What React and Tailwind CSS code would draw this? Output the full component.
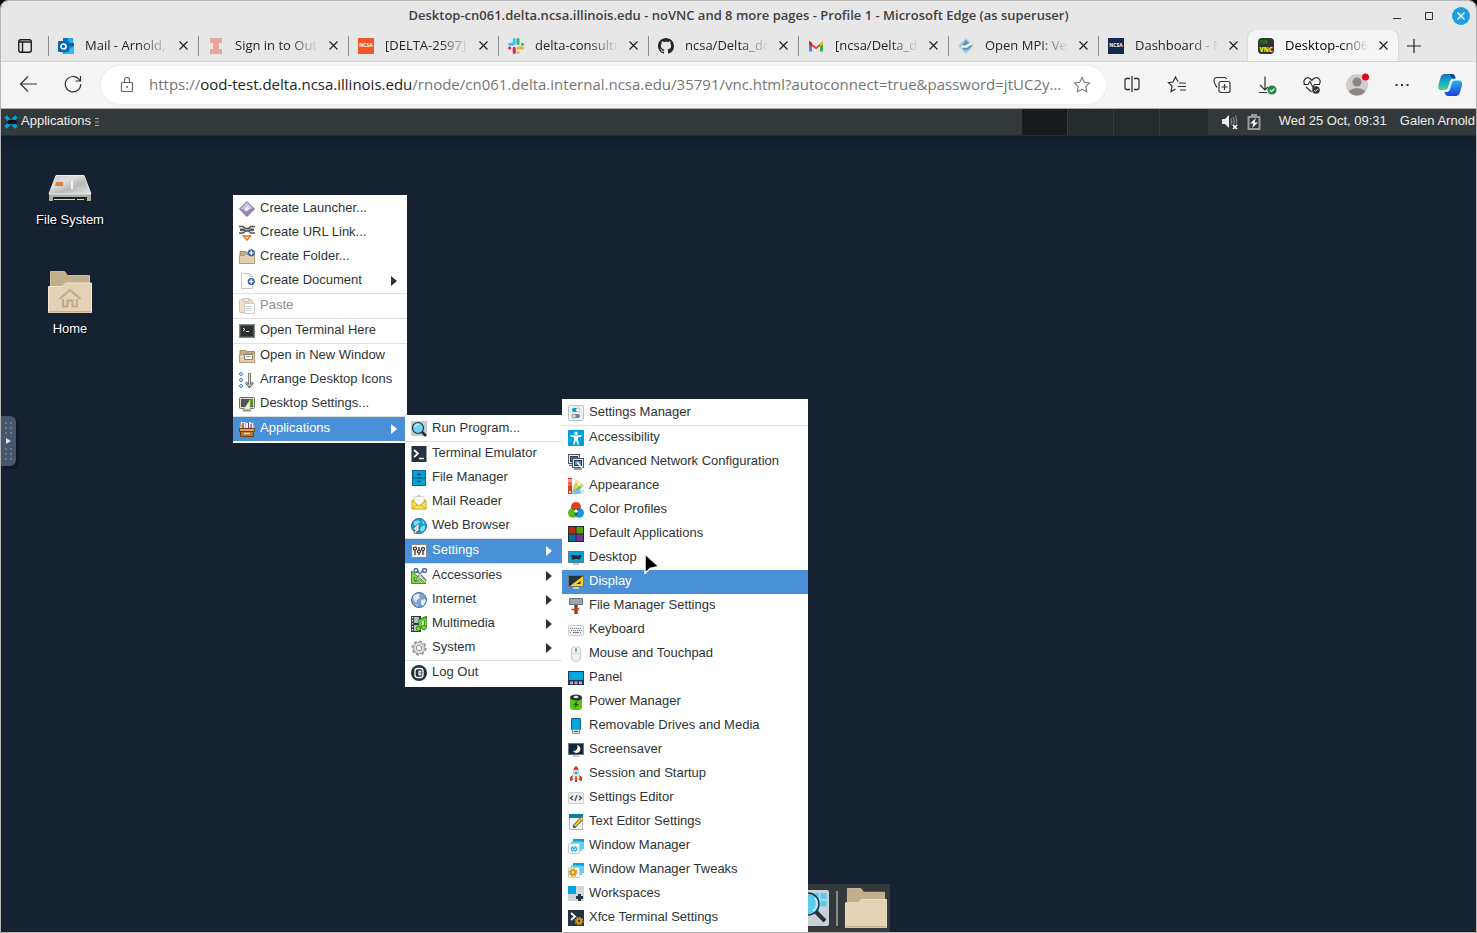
import React from "react";

const UI = "font-['Open_Sans','Noto_Sans',sans-serif]";
const GTK = "font-['Liberation_Sans',Arial,sans-serif]";

function Svg({ children, size = 16, className = "", box = 16 }) {
  return (
    <svg
      aria-hidden="true"
      width={size}
      height={size}
      viewBox={`0 0 ${box} ${box}`}
      fill="none"
      className={`shrink-0 ${className}`}
    >
      {children}
    </svg>
  );
}

/* ---------- menu icons, all on a 16 x 16 grid ---------- */

const monitor = (fill) => (
  <>
    <rect y="1" width="16" height="12" fill="#6b7680" />
    <rect x="1" y="2" width="14" height="10" fill={fill} />
    <path d="M5 13h6v2H5z" fill="#c3c8cc" />
  </>
);

const folder = (
  <>
    <path d="M1 2.5h6l1 1h7.5V14H1z" fill="#c1ab88" stroke="#a58f6a" />
    <path d="M.5 6.5h5l1-1h9v9H.5z" fill="#e2ceb1" stroke="#b59b74" />
  </>
);

const plusBadge = (x, y) => (
  <g transform={`translate(${x} ${y})`}>
    <circle r="3.6" fill="#3465a4" />
    <path d="M-2.2 0h4.4M0-2.2v4.400" stroke="#fff" strokeWidth="1.3" />
  </g>
);

const stackedWindows = (
  <>
    <path d="M5 1h11v10H5z" fill="#00a6dd" />
    <path d="M13 4h3v7h-3z" fill="#5fd0f4" />
    <path d="M3 3.5h11V13H3z" fill="#5fd0f4" />
    <rect x=".5" y="5.5" width="11" height="10" rx="1" fill="#f2f4f5" stroke="#c5cace" />
  </>
);

const gear = (color, cx, cy, r) => (
  <g transform={`translate(${cx} ${cy})`} stroke={color}>
    <circle r={r} strokeWidth="2" />
    <circle r={r + 1.4} strokeWidth="1.6" strokeDasharray={`${(r + 1.4) * 0.393} ${(r + 1.4) * 0.393}`} />
  </g>
);

const icons = {
  launcher: (
    <>
      <path d="M8 .5 15.5 8 8 15.5.5 8z" fill="#9a8bba" stroke="#81759c" />
      <path d="M8 1.2 14.200 7.500 8 10 1.800 7.500z" fill="#cbc2de" />
      <path d="M8 10v5M8 10l6-2.500" stroke="#7d6ea0" strokeWidth=".8" />
      <path d="M5.500 8.500 9 4l-.4 3L11 6.500 7.500 11z" fill="#fff" fillOpacity=".75" />
    </>
  ),
  link: (
    <>
      <path d="M0 1.500h4l2.500 2h3l2.500-2h4M0 8h4l2.500-2h3L12 8h4" stroke="#50524f" strokeWidth="1.600" />
      <path d="M1 4.700h14" stroke="#50524f" strokeWidth="2.600" />
      <path d="M0 3h4M12 3h4M2 6.300h3M11 6.300h3M5.500 4.700h5" stroke="#c8cac5" strokeWidth="1.100" />
      <path d="M4.500 11h7L8 15z" fill="#fff" stroke="#e8791a" strokeWidth="1.500" />
    </>
  ),
  newFolder: <>{folder}{plusBadge(12.3, 3.800)}</>,
  newDoc: (
    <>
      <path d="M2.500.5h8l3 3v12h-11z" fill="#fbfbfb" stroke="#c6c8c4" />
      <path d="M10.500.5v3h3" stroke="#c6c8c4" />
      {plusBadge(12.300, 8.500)}
    </>
  ),
  paste: (
    <g opacity=".6">
      <rect x=".5" y="1.500" width="13" height="13" rx="1" fill="#e5cda2" stroke="#b79a68" />
      <path d="M4 .5h6v3H4z" fill="#ddd" stroke="#999" />
      <path d="M5.500 5.500h10v10h-10z" fill="#fff" stroke="#aaa" />
      <path d="M7 8.500h6M7 10.500h7M7 12.500h5" stroke="#b5b5b5" />
    </g>
  ),
  terminal: (
    <>
      <rect x=".5" y="1.500" width="15" height="13" fill="#2b302d" stroke="#888a85" />
      <rect x="1.500" y="2.500" width="13" height="11" stroke="#4c504d" />
      <path d="m4 5 2 1.500L4 8M7 8.500h3" stroke="#e7ebe4" />
    </>
  ),
  newWindow: (
    <>
      {folder}
      <path d="M5.500 6.500h8v5h-8z" fill="#fff" stroke="#84827b" />
      <path d="M7 8.500h5" stroke="#a7a59d" />
    </>
  ),
  arrange: (
    <>
      <g stroke="#4b7bb8" fill="#e8f0fa">
        <circle cx="2" cy="2" r="1.500" />
        <circle cx="2" cy="8" r="1.500" />
        <circle cx="2" cy="14" r="1.500" />
      </g>
      <path d="M10.500 1v13M7 10.500l3.500 4 3.500-4" stroke="#5c5f5b" strokeWidth="2.600" />
      <path d="M10.500 1.500v12M7.500 11l3 3.300 3-3.300" stroke="#dfe0de" />
    </>
  ),
  desktopSettings: (
    <>
      <rect x=".5" y="1.500" width="15" height="11" rx="1" fill="#d9dbd7" stroke="#6b6e69" />
      <rect x="2" y="3" width="12" height="8" fill="#4d584c" />
      <path d="M10 3h4v7h-4z" fill="#4e9a06" />
      <path d="M4 14.500 11 4v9z" fill="#f6efd9" stroke="#c9bd96" strokeWidth=".6" />
      <path d="M4 14.500h8" stroke="#8d908b" strokeWidth="2" />
    </>
  ),
  applications: (
    <>
      <path d="M2 8 3 1M5.500 8V1M8 8V2M11 8V1M14 8l-1-6" stroke="#f2f0f3" strokeWidth="2" />
      <path d="M4 2v6M9.500 2v6M12 3v5" stroke="#8b3150" />
      <path d="M1 3.500 3 6" stroke="#d9a521" strokeWidth="2" />
      <path d="M.5 7.500h15v3H.5z" fill="#d5a663" stroke="#6b3f10" />
      <path d="M1.500 10.500h13v5h-13z" fill="#b5762f" stroke="#6b3f10" />
      <path d="M5 12.500h6" stroke="#f4dcb0" strokeWidth="1.500" />
    </>
  ),
  run: (
    <>
      <rect x="0" y="0" width="16" height="15" rx="1" fill="#c4c9cc" />
      <path d="m10.500 10.500 4.500 4.500" stroke="#25323c" strokeWidth="2.600" />
      <circle cx="7" cy="7" r="5.500" fill="#6ed3f4" stroke="#25323c" strokeWidth="1.200" />
      <path d="M4 6a3.500 3.500 0 0 1 4-2.500" stroke="#c6f0fc" strokeWidth="1.300" />
    </>
  ),
  xterm: (
    <>
      <rect x=".5" width="15" height="16" fill="#263442" />
      <path d="m3 4 4 3.500L3 11" stroke="#fff" strokeWidth="1.700" />
      <path d="M8 12.500h5" stroke="#fff" strokeWidth="1.500" />
    </>
  ),
  fileManager: (
    <>
      <rect x="1.500" y=".5" width="13" height="15" fill="#00a4db" stroke="#14668a" />
      <path d="M2 8h12" stroke="#14506e" strokeWidth="1.200" />
      <path d="M6 4.500h4M6 11.500h4" stroke="#0d3c54" strokeWidth="1.300" />
    </>
  ),
  mail: (
    <>
      <path d="M1 6 8 .8 15 6v9H1z" fill="#e5bd1b" />
      <path d="M3 2.500h10v9H3z" fill="#f7f8f8" stroke="#c8ccce" strokeWidth=".7" />
      <path d="M1 6.500 8 12l7-5.500V15H1z" fill="#fbe26b" stroke="#d4a500" />
      <path d="m1.500 14.500 5-4M14.500 14.500l-5-4" stroke="#d4a500" />
    </>
  ),
  web: (
    <>
      <circle cx="8" cy="8" r="7.500" fill="#15a2d6" stroke="#0f7096" />
      <path d="M3 4c2-2 5-2 6 0l-1 3-2 1-3-1zM10 9l4-2v4l-3 3-2-2zM11 2l3 3-2 1z" fill="#84dcf7" />
      <path d="m8 5-6.500 6L4 12l-1 3 2 .8L6.300 13 8 14z" fill="#dfe5e8" stroke="#36566a" strokeWidth=".7" />
    </>
  ),
  settings: (
    <>
      <rect x=".5" y="1.500" width="15" height="13" rx="1" fill="#f3f3f1" stroke="#898b87" />
      <path d="M4 4v8M8 4v8M12 4v8" stroke="#2c2f2e" strokeWidth="1.200" />
      <g fill="#f3f3f1" stroke="#2c2f2e" strokeWidth="1.200">
        <circle cx="4" cy="5.500" r="1.500" />
        <circle cx="8" cy="8.500" r="1.500" />
        <circle cx="12" cy="6" r="1.500" />
      </g>
    </>
  ),
  accessories: (
    <>
      <path d="M.5 3v12.500H15z" fill="#85d44b" stroke="#429b13" />
      <path d="M3.500 9v4h4z" fill="#fff" stroke="#429b13" />
      <path d="M12 2 4 14M6 3l9 10" stroke="#747773" strokeWidth="2" />
      <path d="M12 3 6 12M7 5l7 8" stroke="#e5e7e4" />
      <circle cx="5" cy="2.500" r="2" stroke="#3e6ca8" strokeWidth="1.300" />
      <circle cx="13.500" cy="2.500" r="2" stroke="#3e6ca8" strokeWidth="1.300" />
    </>
  ),
  internet: (
    <>
      <circle cx="8" cy="8" r="7.500" fill="#7ea3d1" stroke="#456b9e" />
      <path d="M2 5c1-3 5-4 7-3L8 4l1 2-3 2-1 3-2-3zM10 8l4-1 1 2-3 5-2-2z" fill="#e2ecf6" />
      <path d="M5 12l2 1-1 2z" fill="#cbdcee" />
    </>
  ),
  multimedia: (
    <>
      <path d="M0 0h10v16H0z" fill="#303735" />
      <path d="M3 1h5v6H3zM3 9h5v6H3z" fill="#aebfc8" />
      <path d="M1.500 1v14" stroke="#f4f5f4" strokeDasharray="1.500 1.500" strokeWidth="1.300" />
      <path d="M9 12V4.500L14.500 2v9" stroke="#358c0c" strokeWidth="3.400" />
      <path d="M9 12V5l5.500-2v8" stroke="#75d83b" strokeWidth="1.800" />
      <circle cx="7.500" cy="12.500" r="2.300" fill="#75d83b" stroke="#358c0c" />
      <circle cx="13" cy="11.500" r="2.300" fill="#75d83b" stroke="#358c0c" />
    </>
  ),
  system: (
    <>
      {gear("#8d908c", 8, 8, 5.300)}
      <circle cx="8" cy="8" r="4.800" fill="#e9eae8" stroke="#d0d2cf" strokeWidth="1.800" />
      <circle cx="8" cy="8" r="2.700" fill="#fff" stroke="#8d908c" />
    </>
  ),
  logout: (
    <>
      <circle cx="8" cy="8" r="8" fill="#22303e" />
      <rect x="4" y="3.500" width="8" height="9" rx="2.500" stroke="#fff" strokeWidth="1.300" />
      <path d="M10.500 6.300H8v3.400h2.500M8 8h2.500" stroke="#fff" strokeWidth="1.200" />
    </>
  ),
  settingsManager: (
    <>
      <rect x=".5" y=".5" width="15" height="15" rx="1" fill="#eceff1" stroke="#bcc3c8" />
      <rect x="4" y="3" width="8" height="4" rx="2" fill="#00a0d8" />
      <circle cx="10" cy="5" r="2" fill="#fff" stroke="#98a1a8" strokeWidth=".6" />
      <rect x="4" y="9" width="8" height="4" rx="2" fill="#76828b" />
      <circle cx="6" cy="11" r="2" fill="#d8dde0" stroke="#76828b" strokeWidth=".6" />
    </>
  ),
  accessibility: (
    <>
      <rect width="16" height="16" rx="1" fill="#00a4dc" />
      <circle cx="8" cy="3.200" r="1.700" fill="#fff" />
      <path d="M2.500 5 7 5.500h2l4.500-.5v1.500L10 7.500V10l1 4.500H9.600L8 10.500l-1.600 4H5L6 10V7.500L2.500 6.500z" fill="#fff" />
    </>
  ),
  network: (
    <>
      <rect x=".5" y=".5" width="11" height="9" fill="#e6e6e3" stroke="#555753" />
      <rect x="2.500" y="2.500" width="7" height="5" fill="#4c6da3" stroke="#233a68" />
      <rect x="4.500" y="4.500" width="11" height="9" fill="#e6e6e3" stroke="#555753" />
      <rect x="6.500" y="6.500" width="7" height="5" fill="#6787bb" stroke="#1f3766" />
      <path d="M1 11.500h3M6 15h8" stroke="#73756f" strokeWidth="1.500" />
      <path d="m9 8 5 6" stroke="#f2f2ef" strokeWidth="1.500" />
    </>
  ),
  appearance: (
    <>
      <path d="M0 0h4v16H0z" fill="#d8402c" />
      <path d="M0 1h4v3H0z" fill="#ef9a8b" />
      <path d="M0 4h4v4H0z" fill="#e46a57" />
      <path d="m4 13 4-11 3.500 1.500L6 15z" fill="#f5c63f" />
      <path d="m8 2 3.500 1.500-1 2.500L6.800 5z" fill="#fae3a0" />
      <path d="m5 14 8-9 3 2.500L8 15z" fill="#7dc242" />
      <path d="m13 5 3 2.500-2.500 2L11 7.500z" fill="#c3e6a3" />
      <path d="M5 12h11v4H4z" fill="#6fc5e6" />
      <path d="M12.500 12H16v4h-3.500z" fill="#c5ebf7" />
      <circle cx="2" cy="14" r="1" fill="#fff" />
    </>
  ),
  color: (
    <>
      <circle cx="8" cy="5" r="5" fill="#e73d18" />
      <circle cx="4.800" cy="11" r="4.800" fill="#5cbd12" />
      <circle cx="11.200" cy="11" r="4.800" fill="#0b9bdc" />
      <path d="M3.600 6.300a4.800 4.800 0 0 1 5 2A5 5 0 0 1 3.600 6.300z" fill="#7b3a10" />
      <path d="M12.400 6.300a4.800 4.800 0 0 0-5 2 5 5 0 0 0 5-2z" fill="#74308c" />
      <path d="M8 7.500a4.800 4.800 0 0 1 0 6.800 4.800 4.800 0 0 1 0-6.800z" fill="#1c5a52" />
      <path d="m8 7 2 2.500-2 1.500-2-1.500z" fill="#fff" />
    </>
  ),
  defaults: (
    <>
      <path d="M0 0h16v16H0z" fill="#222b2f" />
      <path d="M1 1h6.500v6.500H1z" fill="#c6240b" />
      <path d="M8.500 1H15v6.500H8.500z" fill="#56a505" />
      <path d="M1 8.500h6.500V15H1z" fill="#046e97" />
      <path d="M8.500 8.500H15V15H8.500z" fill="#743391" />
    </>
  ),
  desktop: (
    <>
      {monitor("#00a6dd")}
      <path d="M2.500 5 4 5.500 5 4.500l1.500 1H11L12.500 4l.3 1.500 1.200 1-1.500 1L12 9.500h-1.200L10 9H7l-1.500.8H4L4.200 8 3 6.500z" fill="#1d2c38" />
    </>
  ),
  display: (
    <>
      {monitor("#26323a")}
      <path d="M15 2v10H2z" fill="#f6cf25" />
      <path d="M12.500 7v3H8.500z" fill="#26323a" />
    </>
  ),
  fmSettings: (
    <>
      <path d="M1.500.5h13v6h-13z" fill="#9aa5ad" stroke="#65727c" />
      <path d="M8 7v9" stroke="#8b3f16" strokeWidth="3.400" />
      <path d="M3.500 11.500h3l3 .5 1.500-2" stroke="#d43e1c" strokeWidth="1.600" />
    </>
  ),
  keyboard: (
    <>
      <rect x=".5" y="3.500" width="15" height="10" rx="1" fill="#eef0f1" stroke="#cbd0d4" />
      <path d="M2 6.500h12M3 8.500h11M2 10.500h2M12 10.500h2" stroke="#727c85" strokeDasharray="1 1" />
      <path d="M5 10.500h6" stroke="#727c85" />
    </>
  ),
  mouse: (
    <>
      <rect x="3.500" y=".5" width="9" height="15" rx="4" fill="#f0f2f3" stroke="#c4cace" />
      <path d="M4 7.500h8" stroke="#d5d9dc" />
      <path d="M8 2v4" stroke="#5b656c" strokeWidth="1.200" />
    </>
  ),
  panel: (
    <>
      <path d="M0 1h16v14H0z" fill="#26394b" />
      <path d="M1 2h14v8H1z" fill="#00a6dd" />
      <path d="M2 11.500h3v2.500H2zM6.500 11.500h3v2.500h-3zM11 11.500h3v2.500h-3z" fill="#cf9bdb" />
    </>
  ),
  power: (
    <>
      <rect x="2" y="1" width="12" height="15" rx="3" fill="#5ac80d" />
      <path d="M2 3.500C3-.5 13-.5 14 3.500S3 7.500 2 3.500z" fill="#25333a" />
      <ellipse cx="8" cy="3" rx="2.500" ry="1.200" fill="#dce2e4" />
      <path d="m9 7-4 4h2.500L6.500 14l4.500-4H8.500z" fill="#1c4a10" />
    </>
  ),
  drives: (
    <>
      <path d="M3.500.5h9v11h-9z" fill="#00a6dd" stroke="#14668a" />
      <path d="M4.500 11.500h7v4h-7z" fill="#d9dee1" stroke="#8b979f" />
      <path d="M6 13.500h4" stroke="#4a5963" />
    </>
  ),
  screensaver: (
    <>
      {monitor("#152645")}
      <path d="M9 3a4 4 0 1 1-4 6 4 4 0 0 0 4-6z" fill="#faf3c4" />
    </>
  ),
  session: (
    <>
      <path d="M8 0c2 1.500 2.500 3 2.500 4h-5C5.500 3 6 1.500 8 0zM2 15v-4l3-2v5zM14 15v-4l-3-2v5zM7 11h2v5H7z" fill="#d43214" />
      <path d="M5.500 4h5l1 9h-7z" fill="#e9edef" stroke="#a3adb4" strokeWidth=".6" />
      <circle cx="8" cy="7" r="1.500" fill="#00a6dd" />
      <path d="M7.300 10h1.400v6H7.300z" fill="#d43214" />
    </>
  ),
  editor: (
    <>
      <rect x=".5" y="2.500" width="15" height="11" rx="1" fill="#eef0f1" stroke="#c8ced2" />
      <path d="m5 6-2.500 2L5 10m6-4 2.500 2L11 10M9 5l-2 6" stroke="#394753" strokeWidth="1.200" />
    </>
  ),
  textEditor: (
    <>
      <path d="M1.500 1.500h13v14h-13z" fill="#f1f3f4" stroke="#aeb7bd" />
      <path d="M1 0h14v4H1z" fill="#0d7fa8" />
      <path d="M13.500 5 6 12.500" stroke="#222d34" strokeWidth="3.400" />
      <path d="M14.500 4 6.500 12" stroke="#fbc81d" strokeWidth="2.400" />
      <path d="m5 14 .5-2.500 2 2z" fill="#222d34" />
    </>
  ),
  wm: (
    <>
      {stackedWindows}
      <path d="m4 8.500 4 5m0-5-4 5M3.500 9.500v3M8.500 9.500v3" stroke="#29b1e1" strokeWidth="1.300" />
    </>
  ),
  wmTweaks: (
    <>
      {stackedWindows}
      {gear("#d69f0a", 5, 10.500, 2.300)}
    </>
  ),
  workspaces: (
    <>
      <path d="M0 0h16v15H0z" fill="#d1d5d8" />
      <path d="M0 0h8v8H0z" fill="#00a6dd" />
      <path d="M11.500 8v7M8 11.500h7" stroke="#263745" strokeWidth="3" />
    </>
  ),
  xfceTerm: (
    <>
      <path d="M0 0h16v16H0z" fill="#263442" />
      <path d="m3 3 4 3.500L3 10" stroke="#fff" strokeWidth="1.700" />
      {gear("#cf9c12", 11, 11, 2.200)}
    </>
  ),
};

/* ---------- menu data ---------- */

const desktopMenu = [
  ["Create Launcher...", "launcher"],
  ["Create URL Link...", "link"],
  ["Create Folder...", "newFolder"],
  ["Create Document", "newDoc", { sub: true }],
  null,
  ["Paste", "paste", { disabled: true }],
  null,
  ["Open Terminal Here", "terminal"],
  null,
  ["Open in New Window", "newWindow"],
  ["Arrange Desktop Icons", "arrange"],
  ["Desktop Settings...", "desktopSettings"],
  null,
  ["Applications", "applications", { sub: true, active: true }],
];

const applicationsMenu = [
  ["Run Program...", "run"],
  null,
  ["Terminal Emulator", "xterm"],
  ["File Manager", "fileManager"],
  ["Mail Reader", "mail"],
  ["Web Browser", "web"],
  null,
  ["Settings", "settings", { sub: true, active: true }],
  null,
  ["Accessories", "accessories", { sub: true }],
  ["Internet", "internet", { sub: true }],
  ["Multimedia", "multimedia", { sub: true }],
  ["System", "system", { sub: true }],
  null,
  ["Log Out", "logout"],
];

const settingsMenu = [
  ["Settings Manager", "settingsManager"],
  null,
  ["Accessibility", "accessibility"],
  ["Advanced Network Configuration", "network"],
  ["Appearance", "appearance"],
  ["Color Profiles", "color"],
  ["Default Applications", "defaults"],
  ["Desktop", "desktop"],
  ["Display", "display", { active: true }],
  ["File Manager Settings", "fmSettings"],
  ["Keyboard", "keyboard"],
  ["Mouse and Touchpad", "mouse"],
  ["Panel", "panel"],
  ["Power Manager", "power"],
  ["Removable Drives and Media", "drives"],
  ["Screensaver", "screensaver"],
  ["Session and Startup", "session"],
  ["Settings Editor", "editor"],
  ["Text Editor Settings", "textEditor"],
  ["Window Manager", "wm"],
  ["Window Manager Tweaks", "wmTweaks"],
  ["Workspaces", "workspaces"],
  ["Xfce Terminal Settings", "xfceTerm"],
];

function Menu({ label, items, className }) {
  return (
    <ul role="menu" aria-label={label} className={`absolute bg-white py-0.5 text-[13px] ${className}`}>
      {items.map((item, i) => {
        if (!item) return <li key={i} role="separator" className="h-px bg-[#dfdfdf]" />;
        const [text, icon, { sub, active, disabled } = {}] = item;
        const tone = active ? "bg-[#4a90d9] text-white" : disabled ? "text-[#8b8e8f]" : "text-[#2e3436]";
        return (
          <li key={i} role="none">
            <button
              type="button"
              role="menuitem"
              disabled={disabled}
              className={`flex h-6 w-full items-center gap-[5px] pr-2.5 pl-1.5 text-left ${tone}`}
            >
              <Svg>{icons[icon]}</Svg>
              <span className="flex-1 pb-0.5 whitespace-nowrap">{text}</span>
              {sub && (
                <svg aria-hidden="true" width="6" height="10" viewBox="0 0 6 10" className="shrink-0">
                  <path d="M0 0l6 5-6 5z" fill="currentColor" />
                </svg>
              )}
            </button>
          </li>
        );
      })}
    </ul>
  );
}

/* ---------- browser tabs ---------- */

const favicons = {
  outlook: (
    <>
      <path d="M5 0h10v6H5z" fill="#28a8ea" />
      <path d="M5 0h5v5H5z" fill="#0078d4" />
      <path d="M10 5h6v5h-6z" fill="#0a5fb5" />
      <path d="M4 9l12-1v8H5z" fill="#1490df" />
      <path d="M16 8v8H6z" fill="#35b8f1" />
      <rect y="3" width="11" height="11" rx="1" fill="#0364b8" />
      <circle cx="5.500" cy="8.500" r="2.500" stroke="#fff" strokeWidth="1.700" />
    </>
  ),
  illinois: <path d="M2 0h12v5h-3v6h3v5H2v-5h3V5H2z" fill="#e9a799" />,
  slack: (
    <g strokeWidth="3" strokeLinecap="round">
      <path d="M6.200 1.600v4.200M1.600 6.200h3" stroke="#36c5f0" />
      <path d="M10 1.600v4.200M14.400 6.200h.1" stroke="#2eb67d" />
      <path d="M10 10h4.400M10 14.400v.1" stroke="#ecb22e" />
      <path d="M6.200 10.200v4.200M1.600 10h.2" stroke="#e01e5a" />
    </g>
  ),
  github: (
    <path
      fill="#24292f"
      d="M8 0C3.580 0 0 3.580 0 8c0 3.540 2.290 6.530 5.470 7.590.4.070.55-.17.55-.38 0-.19-.01-.82-.01-1.490-2.010.37-2.530-.49-2.690-.94-.09-.23-.48-.94-.82-1.130-.28-.15-.68-.52-.01-.53.63-.01 1.080.58 1.230.82.72 1.210 1.870.87 2.330.66.07-.52.28-.87.51-1.070-1.780-.2-3.640-.89-3.640-3.950 0-.87.31-1.590.82-2.150-.08-.2-.36-1.020.08-2.120 0 0 .67-.21 2.200.82.64-.18 1.320-.27 2-.27s1.360.09 2 .27c1.530-1.040 2.200-.82 2.200-.82.44 1.100.16 1.920.08 2.120.51.56.82 1.270.82 2.150 0 3.070-1.870 3.750-3.650 3.950.29.25.54.73.54 1.480 0 1.070-.01 1.930-.01 2.200 0 .21.15.46.55.38A8.010 8.010 0 0 0 16 8c0-4.420-3.580-8-8-8z"
    />
  ),
  gmail: (
    <>
      <path d="M1 4v9.500h3V5z" fill="#4285f4" />
      <path d="M15 4v9.500h-3V5z" fill="#34a853" />
      <path d="M1 3.500 8 9l7-5.500V6l-7 5.300L1 6z" fill="#ea4335" />
      <path d="M12 5l3-2.500V6l-3 2.500z" fill="#fbbc04" />
      <path d="M1 2.800 4 5v3.500L1 6z" fill="#c5221f" />
    </>
  ),
  openmpi: (
    <>
      <path d="M8 .5 15.500 8 8 15.500.5 8z" fill="#9cc3dc" stroke="#c8d3da" />
      <path d="M8 2 11 5 7 8H3z" fill="#5a9bc4" />
      <path d="M3 8.500h5l5-3" stroke="#fff" strokeWidth="1.800" />
      <path d="M5 11h4l4-3" stroke="#4f8db8" strokeWidth="1.500" />
    </>
  ),
};

const badge = "flex size-4 shrink-0 items-center justify-center text-[5px] leading-none font-bold text-white";

function Favicon({ name }) {
  if (name === "jira") return <span className={`${badge} bg-[#f2572b]`}>NCSA</span>;
  if (name === "ncsa") return <span className={`${badge} bg-[#13294b]`}>NCSA</span>;
  if (name === "novnc")
    return (
      <span className="flex size-4 shrink-0 flex-col items-center justify-center rounded-sm bg-[#333] text-[6px] leading-[8px] font-black">
        <span className="self-start pl-0.5 text-[#0a8a0a]">no</span>
        <span className="text-[#f4f400]">VNC</span>
      </span>
    );
  return <Svg>{favicons[name]}</Svg>;
}

const tabs = [
  ["Mail - Arnold, Galen", "outlook"],
  ["Sign in to Outlook", "illinois"],
  ["[DELTA-2597] NCSA", "jira"],
  ["delta-consulting", "slack"],
  ["ncsa/Delta_docs", "github"],
  ["[ncsa/Delta_docs]", "gmail"],
  ["Open MPI: Version", "openmpi"],
  ["Dashboard - NCSA", "ncsa"],
  ["Desktop-cn061.delta", "novnc", true],
];

function Tab({ text, icon, active }) {
  return (
    <div
      role="tab"
      aria-selected={!!active}
      className={`flex w-[150px] min-w-0 items-center pl-2.5 ${
        active ? "rounded-t-lg bg-[#f5f5f5] text-black shadow-[0_0_2px_#bbb]" : "relative text-[#262626]"
      }`}
    >
      {!active && <span className="absolute top-1.5 left-0 h-5 w-px bg-[#8c8c8c]" />}
      <Favicon name={icon} />
      <span className="ml-[11px] w-[84px] overflow-hidden mask-r-from-65% mask-r-to-100% text-[13px] whitespace-nowrap">
        {text}
      </span>
      <button type="button" aria-label={`Close ${text}`} className="ml-1.5 flex size-4 items-center justify-center">
        <Svg size={9} box={9}>
          <path d="M.5.5l8 8m0-8-8 8" stroke="#222" strokeWidth="1.200" />
        </Svg>
      </button>
    </div>
  );
}

function ToolButton({ label, children, size = 20, box = 20 }) {
  return (
    <button type="button" aria-label={label} className="relative flex w-6 items-center justify-center">
      <Svg size={size} box={box}>
        {children}
      </Svg>
    </button>
  );
}

const star = "M10 2.500l2.300 4.800 5.200.7-3.800 3.600 1 5.200L10 14.300l-4.700 2.500 1-5.200L2.500 8l5.200-.7z";

function Browser() {
  return (
    <header className={UI}>
      <div className="relative flex h-[29px] items-center justify-center bg-[#e7e7e7]">
        <h1 className="text-[13px] font-semibold text-[#3f3f3f]">
          Desktop-cn061.delta.ncsa.illinois.edu - noVNC and 8 more pages - Profile 1 - Microsoft Edge (as superuser)
        </h1>
        <div className="absolute right-1.5 flex items-center gap-3.5">
          <button type="button" aria-label="Minimize" className="flex size-[18px] items-center justify-center">
            <Svg size={8} box={8}><path d="M0 6.500h8" stroke="#333" /></Svg>
          </button>
          <button type="button" aria-label="Maximize" className="flex size-[18px] items-center justify-center">
            <Svg size={8} box={8}><path d="M.5.5h7v7h-7z" stroke="#333" /></Svg>
          </button>
          <button type="button" aria-label="Close window" className="flex size-[18px] items-center justify-center rounded-full bg-[#1f9ede]">
            <Svg size={8} box={8}><path d="M.5.5l7 7m0-7-7 7" stroke="#fff" strokeWidth="1.300" /></Svg>
          </button>
        </div>
      </div>

      <div role="tablist" className="flex h-8 border-b border-[#d5d5d5] bg-[#e7e7e7]">
        <button type="button" aria-label="Tab actions" className="flex w-[47px] shrink-0 items-center justify-center">
          <Svg size={14} box={14}>
            <rect x=".75" y=".75" width="12.500" height="12.500" rx="2" stroke="#1c1c1c" strokeWidth="1.400" />
            <path d="M1 3h12M4.500 3.500V13" stroke="#1c1c1c" strokeWidth="1.400" />
          </Svg>
        </button>
        {tabs.map(([text, icon, active]) => (
          <Tab key={text} text={text} icon={icon} active={active} />
        ))}
        <button type="button" aria-label="New tab" className="flex w-8 items-center justify-center">
          <Svg size={14} box={14}><path d="M7 0v14M0 7h14" stroke="#222" strokeWidth="1.200" /></Svg>
        </button>
      </div>

      <div className="flex h-[47px] items-center border-b border-[#a9adad] bg-[#f5f5f5] pr-3.5 pl-4 text-[#333]">
        <ToolButton label="Back">
          <path d="M18 9H2m7-7.500L1.500 9 9 16.500" stroke="currentColor" strokeWidth="1.200" />
        </ToolButton>
        <div className="ml-5">
          <ToolButton label="Refresh">
            <path d="M17 6A7.700 7.700 0 1 0 17.700 9M17.500 1v5h-5" stroke="currentColor" strokeWidth="1.200" />
          </ToolButton>
        </div>
        <div className="ml-4 flex h-[38px] min-w-0 flex-1 items-center rounded-full bg-white pr-3 pl-4 shadow-[0_0_3px_#e2e2e2]">
          <Svg size={20} box={20} className="text-[#666]">
            <path d="M5.500 7.500h9a1 1 0 0 1 1 1v7a1 1 0 0 1-1 1h-9a1 1 0 0 1-1-1v-7a1 1 0 0 1 1-1zM7.500 7.500V5a2.500 2.500 0 0 1 5 0v2.500" stroke="currentColor" strokeWidth="1.200" />
            <circle cx="10" cy="12" r="1" fill="currentColor" />
          </Svg>
          <div role="textbox" aria-label="Address" tabIndex={0} className="ml-3 min-w-0 flex-1 truncate pb-0.5 text-[15px] text-[#767676]">
            https://<span className="text-[#222]">ood-test.delta.ncsa.illinois.edu</span>
            /rnode/cn061.delta.internal.ncsa.edu/35791/vnc.html?autoconnect=true&amp;password=jtUC2y…
          </div>
          <ToolButton label="Add to favorites">
            <path d={star} stroke="#777" strokeWidth="1.100" />
          </ToolButton>
        </div>
        <div className="ml-3.5 flex items-center gap-[21px]">
          <ToolButton label="Split screen">
            <path d="M8 3.500H4.500A1.500 1.500 0 0 0 3 5v8a1.500 1.500 0 0 0 1.500 1.500H8M12 3.500h3.500A1.500 1.500 0 0 1 17 5v8a1.500 1.500 0 0 1-1.500 1.500H12M10 1v16" stroke="currentColor" strokeWidth="1.300" />
          </ToolButton>
          <ToolButton label="Favorites">
            <path d="M11 6.500 8.500 2 6 7 1.500 7.700 5 11l-1 5.500 4.500-2.500M12 8h7M11 11.500h8M13 15h6" stroke="currentColor" strokeWidth="1.200" />
          </ToolButton>
          <ToolButton label="Collections">
            <rect x="7" y="6.500" width="11" height="11" rx="2" stroke="currentColor" strokeWidth="1.200" />
            <path d="M12.500 9v6M9.500 12h6M14.500 4A2 2 0 0 0 12.500 2.500H5a3 3 0 0 0-3 3c0 3 2 5 3 7" stroke="currentColor" strokeWidth="1.200" />
          </ToolButton>
          <ToolButton label="Downloads">
            <path d="M8 1.500v13M3 10l5 5 3-3M2 17.500h8" stroke="currentColor" strokeWidth="1.200" />
            <circle cx="15" cy="15" r="4.500" fill="#1b8a3c" />
            <path d="m12.800 15 1.700 1.700 3-3" stroke="#fff" strokeWidth="1.200" />
          </ToolButton>
          <ToolButton label="Browser essentials">
            <path d="M3 9.500C0 6 4 1 8 3.500l1.800 1.800 2-1.800c4-2.500 8.200 1.500 5.400 6M1.500 9.500H6l2-3 3 6 1.500-3H18M4 12l5.500 5" stroke="currentColor" strokeWidth="1.200" />
            <circle cx="14" cy="15" r="3.800" fill="#333" />
            <path d="m12.200 15 1.300 1.300 2.500-2.500" stroke="#fff" />
          </ToolButton>
          <ToolButton label="Profile" size={24} box={24}>
            <circle cx="12" cy="12" r="11" fill="#d0cecc" />
            <circle cx="12" cy="9" r="4.500" fill="#8b8785" />
            <path d="M4 19c1-5 15-5 16 0a11 11 0 0 1-16 0z" fill="#8b8785" />
            <circle cx="20.500" cy="4" r="3.500" fill="#e30613" />
          </ToolButton>
          <ToolButton label="More">
            <path d="M3.500 10h2M9 10h2M14.500 10h2" stroke="currentColor" strokeWidth="2" />
          </ToolButton>
        </div>
        <div className="ml-6">
          <ToolButton label="Copilot" size={24} box={24}>
            <defs>
              <linearGradient id="cpa" x1="0" y1="0" x2="0" y2="1">
                <stop stopColor="#1a73c9" />
                <stop offset=".6" stopColor="#18b5c4" />
                <stop offset="1" stopColor="#5bd08a" />
              </linearGradient>
              <linearGradient id="cpb" x1="0" y1="0" x2="0" y2="1">
                <stop stopColor="#27b5ee" />
                <stop offset="1" stopColor="#1a3fe0" />
              </linearGradient>
            </defs>
            <path d="M17.500 23h-7c-2.500 0-3.500-1.500-4-4h2c2 0 3-1 3.600-3l1.700-6c.5-1.700 1.700-2.500 3.200-2.500H21c3 0 3.400 3 2.700 6l-2 6.500c-.7 2-2.200 3-4.200 3z" fill="url(#cpb)" />
            <path d="M6.500 1h7c2.500 0 3.500 1.500 4 4.500h-2c-2 0-3 1-3.600 3l-1.800 6c-.5 1.700-1.600 2.500-3.100 2.500H3C0 17 0 14 .7 11L2.500 4.500C3.200 2 4.500 1 6.500 1z" fill="url(#cpa)" />
            <path d="M11 1h3c2.200 0 3 1.800 3.600 4.500h-2.300C13 5.500 13.500 1 11 1z" fill="#123f9c" />
          </ToolButton>
        </div>
      </div>
    </header>
  );
}

/* ---------- remote desktop ---------- */

function Panel() {
  return (
    <div className="flex h-[27px] items-center border-b border-[#262b2d] bg-[#33393b] pr-px text-[13px] text-[#eeeeec]">
      <button type="button" className="flex items-center gap-[3px] pl-[3px]">
        <Svg size={14} box={14}>
          <path d="M1.500 1.500l11 11m0-11-11 11" stroke="#00a6dd" strokeWidth="3.400" />
          <path d="M3.500 6 5 4.800h4L11.500 5l1.500 2-2 2.300H5L3.500 9z" fill="#0b1013" />
        </Svg>
        <span className="pb-0.5">Applications</span>
      </button>
      <Svg size={8} box={8} className="ml-1">
        <path d="M0 .5h4M0 4h4M0 7.500h4" stroke="#a2a6a7" />
      </Svg>
      <div className="ml-auto flex h-full gap-px bg-[#363c3e]">
        <button type="button" aria-label="Workspace 1" className="w-[45px] bg-[#1a1b1d]" />
        <button type="button" aria-label="Workspace 2" className="w-[45px] bg-[#252a2b]" />
        <button type="button" aria-label="Workspace 3" className="w-[45px] bg-[#252a2b]" />
        <button type="button" aria-label="Workspace 4" className="w-12 bg-[#252a2b]" />
      </div>
      <button type="button" aria-label="Volume muted" className="ml-3.5">
        <Svg>
          <path d="M0 5h3l4-4v13l-4-4H0z" fill="#eeeeec" />
          <path d="M9 4.500c1 2 1 4 0 6M11 3c1.500 3 1.500 6 0 9M13.500 1.500c1.500 3 1.500 5 1 8" stroke="#7d8182" strokeWidth="1.300" />
          <path d="m11 11 4 4m0-4-4 4" stroke="#fff" strokeWidth="1.600" />
        </Svg>
      </button>
      <button type="button" aria-label="Battery" className="ml-2">
        <Svg>
          <path d="M5 0h6v2h2.500a1 1 0 0 1 1 1v12a1 1 0 0 1-1 1h-11a1 1 0 0 1-1-1V3a1 1 0 0 1 1-1H5z" fill="#9a9d9e" />
          <path d="M3.500 4h9v10h-9z" fill="#33393b" />
          <path d="m10 4-6 5.500h3.500L6 14l6-5.500H8.500z" fill="#fff" />
        </Svg>
      </button>
      <time className="ml-[17px] pb-0.5">Wed 25 Oct, 09:31</time>
      <button type="button" className="ml-[13px] pb-0.5">Galen Arnold</button>
    </div>
  );
}

function FolderArt({ children, width = 44, height = 42 }) {
  return (
    <svg aria-hidden="true" width={width} height={height} viewBox="0 0 44 42" fill="none">
      <path d="M2.500.5h14l3 4h22V20h-39z" fill="#c1af8b" stroke="#cdbc97" />
      <path d="M.5 15.500h14l3-3.500h26v29.500H.5z" fill="#e4d1b6" stroke="#f3e4cd" />
      <path d="M1 40h42v1.500H1z" fill="#c9b38d" />
      {children}
    </svg>
  );
}

function DesktopIcon({ label, className, children }) {
  return (
    <button
      type="button"
      className={`absolute flex w-24 flex-col items-center gap-2 text-[13px] leading-4 text-white [text-shadow:1px_1px_1px_#000] ${className}`}
    >
      {children}
      <span>{label}</span>
    </button>
  );
}

export default function App() {
  return (
    <div className="h-screen bg-black">
      <div className="flex h-full flex-col overflow-hidden rounded-t-lg border border-[#b5b5b5]">
        <Browser />
        <main className={`flex min-h-0 flex-1 flex-col bg-[#162231] ${GTK}`}>
          <Panel />
          <div className="relative min-h-0 flex-1 overflow-hidden bg-linear-to-b from-[#111c2d] to-[#162231] to-[14px]">
            <DesktopIcon label="File System" className="top-[38px] left-[21px]">
              <svg aria-hidden="true" width="44" height="30" viewBox="0 0 44 30" fill="none">
                <defs>
                  <linearGradient id="hdd" x1="0" y1="0" x2="1" y2="1">
                    <stop stopColor="#c4c4c4" />
                    <stop offset=".35" stopColor="#dedede" />
                    <stop offset=".6" stopColor="#b9b9b9" />
                    <stop offset="1" stopColor="#e6e6e6" />
                  </linearGradient>
                </defs>
                <path d="M1 20h42v7h-4v-2H5v2H1z" fill="#aab0a8" />
                <path d="M8 1.500h28l7 18.500H1z" fill="url(#hdd)" stroke="#eeeeec" />
                <path d="M5 23h34v4H5z" fill="#1c2421" />
                <path d="M6 25.500h21M29 25.500h7" stroke="#d3d7cf" />
                <path d="M8 8h7v4H7z" fill="#d6813f" />
                <path d="M24 7v8" stroke="#f2f2f2" strokeWidth="2" />
              </svg>
            </DesktopIcon>
            <DesktopIcon label="Home" className="top-[135px] left-[21px]">
              <FolderArt>
                <path d="m11.500 28 10.500-9 10.500 9" stroke="#c0a988" strokeWidth="2" />
                <path d="M15 28v7.500h4.500v-6h5v6H29v-7.500" stroke="#c0a988" strokeWidth="2" />
              </FolderArt>
            </DesktopIcon>

            <button
              type="button"
              aria-label="Show control bar"
              className="absolute top-[280px] left-0 h-[50px] w-[15px] rounded-r-md bg-[#46566e] shadow-[3px_3px_0_#0f1826]"
            >
              <svg aria-hidden="true" width="15" height="50" viewBox="0 0 15 50">
                <path
                  d="M4 7h2M9 7h2M4 12h2M9 12h2M4 17h2M9 17h2M4 33h2M9 33h2M4 38h2M9 38h2M4 43h2M9 43h2"
                  stroke="#6d7b90"
                  strokeWidth="2"
                />
                <path d="M5 22v6l5-3z" fill="#e0e2e5" />
              </svg>
            </button>

            <nav
              aria-label="Dock"
              className="absolute bottom-0 left-1/2 flex h-12 w-[302px] -translate-x-1/2 items-center justify-end gap-[7px] bg-[#33393b] pr-[3px]"
            >
              <button type="button" aria-label="Application Finder">
                <Svg size={36} box={36}>
                  <rect width="36" height="36" rx="2" fill="#c9d1d6" />
                  <path d="M20 3h6v6h-6zM27.500 3h6v6h-6zM27.500 10.500h6v6h-6zM20 18h6v6h-6z" fill="#55cdf2" />
                  <path d="m23 22 9 9" stroke="#25323c" strokeWidth="4" />
                  <circle cx="15" cy="14" r="11" fill="#5ccbf0" stroke="#25323c" strokeWidth="1.500" />
                  <path d="M22 8a9 9 0 0 1-2 13" stroke="#b5ebfb" strokeWidth="2" />
                </Svg>
              </button>
              <span className="h-[35px] w-0.5 bg-[#85898a]" />
              <button type="button" aria-label="Home folder">
                <FolderArt width={42} height={40} />
              </button>
            </nav>

            <Menu label="Desktop" items={desktopMenu} className="top-[59px] left-[232px] w-[174px]" />
            <Menu label="Applications" items={applicationsMenu} className="top-[279px] left-[404px] w-[157px]" />
            <Menu label="Settings" items={settingsMenu} className="top-[263px] left-[561px] w-[246px]" />

            <svg
              aria-hidden="true"
              width="18"
              height="24"
              viewBox="0 0 18 24"
              className="pointer-events-none absolute top-[417px] left-[642px]"
            >
              <path d="M2 1v19.500l5-5 9-2z" fill="#000" stroke="#fff" strokeWidth="1.500" strokeLinejoin="round" />
            </svg>
          </div>
        </main>
      </div>
    </div>
  );
}
